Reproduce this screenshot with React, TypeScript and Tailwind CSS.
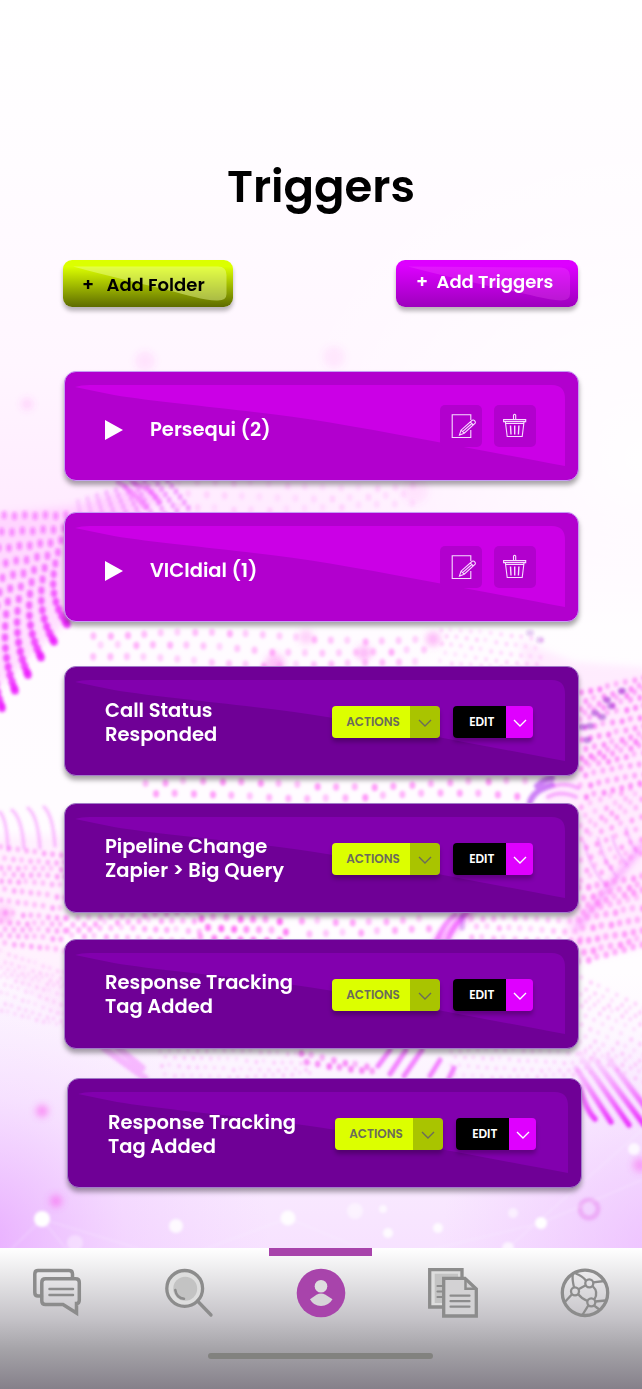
import React from "react";

type Dot = { x: number; y: number; rx: number; ry: number; o: number; c: string };

const noise = (n: number) => {
  const v = Math.sin(n * 127.1 + 11.7) * 43758.5453;
  return v - Math.floor(v);
};

function leftWave(): Dot[] {
  const dots: Dot[] = [];
  for (let i = 0; i < 11; i++) {
    const endX = 66 - i * 13;
    const endY = 624 + i * 16.6;
    const topX = 66 - i * 10.3;
    const count = 12 + i;
    for (let j = 0; j <= count; j++) {
      const t = j / count;
      const e = 1 - Math.pow(1 - t, 1.45);
      const y = 515 + (i % 2) + (endY - 515) * e;
      const x = topX + (endX - topX) * e - Math.sin(Math.pow(e, 1.4) * Math.PI) * 11 - e * 3 + Math.pow(e, 8) * 4;
      dots.push({ x, y, rx: 2.7 + t * 1.2, ry: 4.2, o: 0.36 + t * 0.5, c: "#ee1eff" });
    }
  }
  for (let i = 0; i < 10; i++) {
    for (let j = 0; j < 7; j++) {
      dots.push({
        x: 78 + i * 9.5 + j * (1 + i * 0.35),
        y: 510 - i * 3 + j * 5.5 - 8,
        rx: 2.5,
        ry: 3.2,
        o: 0.16 + i * 0.035,
        c: "#e94cff",
      });
    }
  }
  return dots;
}

function grid(
  x0: number, y0: number, x1: number, y1: number, sx: number, sy: number,
  r: number, o: number, c: string, slope = 0, seed = 1,
): Dot[] {
  const dots: Dot[] = [];
  let row = 0;
  for (let y = y0; y <= y1; y += sy) {
    for (let x = x0 + (row % 2) * (sx / 2); x <= x1; x += sx) {
      const k = noise(x * 3 + y * 7 + seed);
      dots.push({
        x: x + k * 2,
        y: y + slope * (x - x0) + Math.sin(x / 45 + row) * 3 + k * 2,
        rx: r,
        ry: r * 1.25,
        o: o * (0.55 + k * 0.6),
        c,
      });
    }
    row++;
  }
  return dots;
}

const softDots: Dot[] = [
  ...leftWave(),
  ...grid(178, 484, 420, 506, 18, 11, 3, 0.18, "#ff70f5", 0, 2),
  ...grid(92, 632, 430, 668, 17, 13, 3, 0.52, "#ff7af7", 0.02, 3),
  ...grid(440, 630, 540, 672, 10, 7, 2, 0.3, "#ff7af7", 0.1, 4),
  ...grid(145, 783, 530, 796, 19, 12, 3, 0.6, "#ff64f6", 0, 5),
  ...grid(0, 846, 66, 948, 8.5, 9, 2.4, 0.5, "#fb62f5", 0.08, 6),
  ...grid(0, 950, 66, 1010, 7, 7, 1.8, 0.26, "#fb72f5", 0.3, 7),
  ...grid(66, 914, 200, 938, 11, 8, 2.6, 0.45, "#ff5cf6", 0, 8),
  ...grid(200, 920, 290, 938, 13, 8, 3, 0.7, "#ff45f3", 0, 18),
  ...grid(300, 918, 430, 938, 17, 12, 3, 0.5, "#ff5cf6", 0, 28),
  ...grid(580, 690, 648, 800, 9, 8, 2.5, 0.65, "#fb5cf6", -0.25, 9),
  ...grid(580, 805, 648, 880, 10, 9, 2.4, 0.48, "#ff64f6", -0.4, 10),
  ...grid(578, 886, 648, 960, 9, 9, 2.8, 0.55, "#ff64f6", -0.22, 11),
  ...grid(470, 920, 580, 938, 11, 8, 2.6, 0.42, "#ff64f6", 0, 12),
  ...grid(580, 975, 648, 1060, 9, 8, 2, 0.3, "#ff74f6", 0.45, 13),
  ...grid(160, 1052, 310, 1076, 9, 7, 1.8, 0.28, "#ff64f6", 0, 14),
  ...grid(450, 1052, 590, 1076, 9, 7, 1.8, 0.26, "#ff64f6", 0, 24),
  ...grid(300, 1051, 375, 1062, 11, 6, 2.8, 0.6, "#f63bf2", 0.18, 15),
];

const violetDots = [
  [582, 727], [587, 740], [595, 713], [602, 717], [607, 700], [611, 706], [622, 691], [590, 726], [530, 633], [540, 640],
];

const hazeSpots = [
  [145, 361, 10, 0.11], [334, 357, 11, 0.1], [27, 404, 6, 0.18], [306, 637, 7, 0.28], [364, 653, 7, 0.42],
  [433, 639, 7, 0.42], [275, 664, 10, 0.35], [42, 1111, 6, 0.6], [56, 1201, 6, 0.55], [4, 915, 9, 0.3], [640, 1165, 7, 0.45], [415, 490, 13, 0.1],
];

const sparkles = [
  [42, 1219, 8, 1], [176, 1226, 7, 0.85], [288, 1218, 7.5, 0.9], [355, 1211, 8, 0.5], [383, 1209, 4, 0.7],
  [388, 1233, 5, 0.85], [438, 1228, 5, 0.85], [541, 1223, 6, 1], [513, 1213, 5, 0.55], [634, 1149, 6, 0.8], [75, 1243, 8, 0.35], [508, 1248, 6, 0.7],
];

function Backdrop() {
  return (
    <svg className="absolute inset-0 h-full w-full" viewBox="0 0 642 1389" aria-hidden="true">
      <defs>
        <linearGradient id="base" x1="0" y1="0" x2="0" y2="1">
          <stop offset="0" stopColor="#ffffff" />
          <stop offset="0.12" stopColor="#fffcff" />
          <stop offset="0.26" stopColor="#fff6ff" />
          <stop offset="0.37" stopColor="#ffebff" />
          <stop offset="0.45" stopColor="#fffbff" />
          <stop offset="0.7" stopColor="#fffdff" />
          <stop offset="0.8" stopColor="#fbf1ff" />
          <stop offset="0.9" stopColor="#f7e2ff" />
        </linearGradient>
        <radialGradient id="cornerLeft" gradientUnits="userSpaceOnUse" cx="-20" cy="1240" r="290">
          <stop offset="0" stopColor="#e296ff" stopOpacity="0.7" />
          <stop offset="0.5" stopColor="#e7abff" stopOpacity="0.24" />
          <stop offset="1" stopColor="#e9b5ff" stopOpacity="0" />
        </radialGradient>
        <radialGradient id="cornerRight" gradientUnits="userSpaceOnUse" cx="660" cy="1250" r="220">
          <stop offset="0" stopColor="#e6a8ff" stopOpacity="0.55" />
          <stop offset="1" stopColor="#e9b5ff" stopOpacity="0" />
        </radialGradient>
        <radialGradient id="light" gradientUnits="userSpaceOnUse" cx="642" cy="460" r="360">
          <stop offset="0" stopColor="#ffffff" stopOpacity="0.95" />
          <stop offset="1" stopColor="#ffffff" stopOpacity="0" />
        </radialGradient>
        <linearGradient id="fade" gradientUnits="userSpaceOnUse" x1="0" y1="1055" x2="0" y2="1122">
          <stop offset="0" stopColor="#f64dff" stopOpacity="0.1" />
          <stop offset="1" stopColor="#ea22ff" stopOpacity="0.9" />
        </linearGradient>
        <filter id="soft" x="-10%" y="-10%" width="120%" height="120%"><feGaussianBlur stdDeviation="1.500" /></filter>
        <filter id="hazy" x="-10%" y="-10%" width="120%" height="120%"><feGaussianBlur stdDeviation="3.500" /></filter>
      </defs>
      <rect width="642" height="1389" fill="url(#base)" />
      <rect width="642" height="1389" fill="url(#light)" />
      <rect width="642" height="1389" fill="url(#cornerLeft)" />
      <rect width="642" height="1389" fill="url(#cornerRight)" />
      <g filter="url(#hazy)">
        <path d="M-10 515L80 505L150 480L165 495L68 560V620L-10 695Z" fill="#ff9cff" opacity="0.28" />
        <path d="M520 640L575 662L655 668V945L570 963Z" fill="#ffb0fb" opacity="0.2" />
        <path d="M-10 835H64V1020L-10 960Z" fill="#ffb8fb" opacity="0.15" />
        <path d="M436 944L472 908" stroke="#f52fff" strokeWidth="9" opacity="0.42" />
        <path d="M575 930L645 842" stroke="#f52fff" strokeWidth="6" opacity="0.42" />
        {hazeSpots.map(([x, y, r, o], i) => <circle key={i} cx={x} cy={y} r={r} fill="#fb55ee" opacity={o} />)}
      </g>
      <g filter="url(#soft)">
        {softDots.map((d, i) => <ellipse key={i} cx={d.x} cy={d.y} rx={d.rx} ry={d.ry} fill={d.c} opacity={d.o} />)}
        {violetDots.map(([x, y], i) => <ellipse key={i} cx={x} cy={y} rx="4" ry="3.300" fill="#8c20c9" opacity={y < 650 ? 0.22 : 0.5} />)}
        <g fill="none" stroke="#ed35ff" strokeLinecap="round">
          <path d="M118 482Q132 490 146 508M132 482Q150 488 160 502" strokeWidth="5" opacity="0.4" />
          <path d="M12 810Q22 818 24 848M28 808Q38 816 40 848M44 807Q53 815 55 846M0 812Q7 820 8 850" strokeWidth="3.500" opacity="0.3" />
          <path d="M530 802Q534 790 552 785M537 786Q544 779 552 778" stroke="#a51cf0" strokeWidth="6" opacity="0.55" />
          <path d="M548 797Q560 790 576 797M554 786Q566 782 578 788" stroke="#f05cff" strokeWidth="4" opacity="0.45" />
          <path d="M455 915Q444 922 436 942M466 914Q455 922 447 942" strokeWidth="5" opacity="0.5" />
          <path d="M462 916V928" stroke="#9b1cea" strokeWidth="5" opacity="0.3" />
          <path d="M104 1048L145 1078M118 1048L142 1068" strokeWidth="7" opacity="0.3" />
          <path d="M390 1050L378 1066M406 1050L390 1074M422 1050L404 1076M440 1060L430 1076M454 1068L449 1078" strokeWidth="5" opacity="0.6" />
          <path d="M580 1087Q586 1110 595 1119M576 1068L611 1122M582 1058L629 1125M594 1058L645 1126M608 1058L658 1124" stroke="url(#fade)" strokeWidth="5.500" />
          <path d="M584 842Q589 866 606 886M598 838Q603 861 617 877M612 836Q616 852 627 865M626 828Q629 842 637 852" strokeWidth="3" opacity="0.25" />
        </g>
        <circle cx="589" cy="1209" r="9" fill="none" stroke="#e670eb" strokeWidth="5" opacity="0.38" />
        <path d="M42 1219L176 1260L288 1218L388 1260L541 1223L642 1180M42 1219L0 1260M42 1219L75 1260M508 1248L642 1130" fill="none" stroke="#ffffff" strokeWidth="2" opacity="0.18" />
        {sparkles.map(([x, y, r, o], i) => <circle key={i} cx={x} cy={y} r={r} fill="#fff" opacity={o} />)}
      </g>
    </svg>
  );
}

function CardGloss({ tone }: { tone: string }) {
  return (
    <svg className="absolute -left-px -top-px h-[109px] w-[514px]" viewBox="0 0 514 109" aria-hidden="true">
      <path d="M11 16Q17 14 26 14H488Q501 14 501 28V95C430 82 340 64 266 51.500C190 39 105 33 50 24Q30 20 11 16Z" fill={tone} />
    </svg>
  );
}

function EditIcon() {
  return (
    <svg viewBox="0 0 42 42" className="h-[42px] w-[42px]" fill="none" stroke="#f7dcff" strokeWidth="1.100">
      <path d="M30.800 15V9.700H12.200V32.500H30.800V25" />
      <path d="M19.500 30L21 25.200L32.200 15.300Q33.500 14.500 34.700 15.800T35.200 18.200L24.200 28.200L19.500 30ZM21 25.200L24.200 28.200M30.200 17L33.300 20M22.600 26.700L31.800 18.500" />
    </svg>
  );
}

function TrashIcon() {
  return (
    <svg viewBox="0 0 42 42" className="h-[42px] w-[42px]" fill="none" stroke="#f7dcff" strokeWidth="1.100">
      <path d="M19.500 14.500V10Q20.600 8.800 21.700 10V14.500M9.600 14.600H31.700V16.600H9.600ZM11.400 17L13.200 31.500H28.200L30 17M11.500 18.500H29.900" />
      <path d="M16.500 20.500L17 29.500M20.700 20.500V29.500M24.900 20.500L24.400 29.500" strokeWidth="1.400" />
    </svg>
  );
}

function FolderCard({ name }: { name: string }) {
  return (
    <section className="relative h-[110px] w-[515px] rounded-[12px] border border-[#c79df5] bg-[#b200ce] shadow-[0_4px_5px_rgba(0,0,0,0.35)]">
      <CardGloss tone="#cb00e6" />
      <div className="relative flex h-full items-center pl-10 pr-[42px]">
        <svg className="mt-2 h-5 w-[18px]" viewBox="0 0 18 20"><path d="M0 0L18 10L0 20Z" fill="#fff" /></svg>
        <h2 className="ml-[27px] mt-2 whitespace-nowrap text-[19.5px] font-semibold leading-6 text-white">{name}</h2>
        <div className="ml-auto flex gap-3">
          <button className="rounded-[5px] bg-[#b200ce]" aria-label="Edit"><EditIcon /></button>
          <button className="rounded-[5px] bg-[#b200ce]" aria-label="Delete"><TrashIcon /></button>
        </div>
      </div>
    </section>
  );
}

function Chevron({ color }: { color: string }) {
  return <svg className="mt-0.5 h-2 w-[14px]" viewBox="0 0 14 8" fill="none" stroke={color} strokeWidth="1.400"><path d="M1 1L7 7L13 1" /></svg>;
}

function TriggerCard({ name, lowered }: { name: string; lowered?: boolean }) {
  return (
    <section className="relative h-[110px] w-[515px] rounded-[12px] border border-[#a27bc8] bg-[#6f0096] shadow-[0_4px_5px_rgba(0,0,0,0.35)]">
      <CardGloss tone="#8200ae" />
      <div className="relative flex h-full items-center pl-10 pr-[45.5px]">
        <h2 className={`whitespace-pre-line text-[19.5px] font-semibold leading-6 text-white ${lowered ? "mt-[3px]" : "mt-px"}`}>{name}</h2>
        <div className="ml-auto mt-[2px] flex gap-[13.5px] text-[12px] font-semibold">
          <button className="flex h-[31.5px] w-[108px] overflow-hidden rounded-[4px] text-[#6b6b5b] shadow-[0_4px_4px_rgba(0,0,0,0.25)]">
            <span className="flex h-full w-[78px] items-center justify-center bg-[#dcff00] pl-[5px]">ACTIONS</span>
            <span className="flex h-full flex-1 items-center justify-center bg-[#a9c400]"><Chevron color="#6b6b5b" /></span>
          </button>
          <button className="flex h-[31.5px] w-[79.5px] overflow-hidden rounded-[4px] text-white shadow-[0_4px_4px_rgba(0,0,0,0.25)]">
            <span className="flex h-full w-[52.5px] items-center justify-center bg-black pl-[5px]">EDIT</span>
            <span className="flex h-full flex-1 items-center justify-center bg-[#df00ff] pl-px"><Chevron color="#fff" /></span>
          </button>
        </div>
      </div>
    </section>
  );
}

function BottomNav() {
  const icon = "h-[50px] w-[50px]";
  return (
    <nav className="relative flex h-[141px] flex-col items-center bg-[linear-gradient(180deg,#ffffff_0%,#c5c3c8_50%,#a5a3a8_72%,#85808a_100%)]">
      <div className="mr-[1.5px] h-[7.5px] w-[103.5px] bg-[#a844ab]" />
      <div className="mt-[12.5px] flex w-full justify-between px-8">
        <svg className={icon} viewBox="0 0 50 50" fill="none" stroke="#8c8c8c" strokeWidth="3.500" strokeLinecap="round">
          <path d="M9.500 28H6Q2.800 28 2.800 24.500V6Q2.800 2.500 6 2.500H37Q40.500 2.500 40.500 6V10" />
          <path d="M13.500 10.800H43.500Q47.300 10.800 47.300 14.500V32Q47.300 35.500 44.500 35.500V45L31 36.500H13.500Q9.800 36.500 9.800 33V14.500Q9.800 10.800 13.500 10.800Z" />
          <path d="M17.500 21H41M17.500 27H41" strokeWidth="2.500" />
        </svg>
        <svg className={icon} viewBox="0 0 50 50" fill="none" stroke="#8c8c8c" strokeWidth="3.300" strokeLinecap="round">
          <circle cx="20.700" cy="20.400" r="17.900" fill="#dedede" />
          <circle cx="21.200" cy="20.700" r="12" fill="#c3c3c3" stroke="none" />
          <path d="M11.300 22Q12.500 30 20 30.800" strokeWidth="2.500" />
          <path d="M33.500 33L47 47" />
        </svg>
        <svg className={icon} viewBox="0 0 50 50">
          <circle cx="25" cy="25" r="24.300" fill="#a844ab" />
          <circle cx="25" cy="18.300" r="6.300" fill="#dedddf" />
          <path d="M14 31.300L20.500 26.700Q25 24.500 29.500 26.700L36.500 31.300Q32.500 38 25 38T14 31.300Z" fill="#d6d5d8" />
        </svg>
        <svg className={icon} viewBox="0 0 50 50" fill="none" stroke="#8c8c8c" strokeWidth="3.300">
          <path d="M15 39H1.700V1.700H34V10" fill="#dedede" />
          <path d="M6.700 5.700H30V11H15V35H6.700Z" fill="#c3c3c3" stroke="none" />
          <path d="M15.700 10.300H37L48.300 21V48H15.700Z" fill="#d3d2d4" />
          <path d="M37.500 10.300V20.800H48" strokeWidth="2.500" />
          <path d="M9.500 18H14M9.500 23.500H14M9.500 29H14M22.500 27.700H41.500M22.500 33.200H41.500M22.500 38.700H41.500" strokeWidth="2.200" strokeLinecap="round" />
        </svg>
        <svg className={icon} viewBox="0 0 50 50" fill="none" stroke="#8c8c8c" strokeWidth="2.300">
          <circle cx="25" cy="24.800" r="22.700" strokeWidth="3.300" />
          <circle cx="15" cy="23.300" r="4" />
          <circle cx="29.300" cy="15.300" r="4" />
          <circle cx="31.300" cy="34.300" r="4" />
          <path d="M14 19.300Q12 11 12.800 6.500M18.500 21.300L25.800 17.300M26 12.700Q22 7.500 15.500 5.500M33.200 14.300L44.500 13M32.500 18Q39 24 34.300 31.500M18 26Q22 31 27.500 33M12 26.200L4 35M35.200 33.500L45.500 32.500M28.500 37.200L22.700 46.500M34 37.500L40 42" />
        </svg>
      </div>
      <div className="mr-px mt-[35px] h-[6px] w-[225px] rounded-full bg-[#82827f]" />
    </nav>
  );
}

export default function App() {
  return (
    <div className="relative flex h-[1389px] w-[642px] flex-col overflow-hidden bg-white font-['Poppins','Inter',sans-serif]">
      <Backdrop />
      <main className="relative h-[1248px] shrink-0 pt-[157px]">
        <h1 className="text-center text-[45px] font-semibold leading-[60px] text-black">Triggers</h1>
        <div className="mt-[42.5px] flex justify-between pl-[63px] pr-[64.5px]">
          <button className="relative h-[47.5px] w-[169.5px] rounded-[9px] bg-[linear-gradient(180deg,#dcff00_0%,#dcff00_14%,#5d6b00_100%)] shadow-[0_4px_4px_rgba(0,0,0,0.28)]">
            <svg className="absolute left-0 top-0 h-full w-full" viewBox="0 0 169.500 47.500"><path d="M10 6.500H155Q163.500 6.500 163.500 15V34Q163.500 40.500 155 40.500C142 41 125 35 104 30C76 23 45 16 10 6.500Z" fill="#efff98" fillOpacity="0.450" /></svg>
            <span className="relative flex items-center whitespace-nowrap pl-[19px] pt-[3px] text-[18px] font-semibold leading-6 text-black"><span className="w-[24.5px] text-left">+</span>Add Folder</span>
          </button>
          <button className="relative h-[47.5px] w-[181.5px] rounded-[9px] bg-[linear-gradient(180deg,#dd00ff_0%,#dd00ff_12%,#9d00bd_100%)] shadow-[0_4px_4px_rgba(0,0,0,0.28)]">
            <svg className="absolute left-0 top-0 h-full w-full" viewBox="0 0 181.500 47.500"><path d="M12 6.500L165 7.500Q174 8 174 16V34Q174 40.500 165 40.500C150 40 132 34 110 30C80 23 48 16 12 6.500Z" fill="#ff68ff" fillOpacity="0.220" /></svg>
            <span className="relative flex items-center whitespace-nowrap pb-[2px] pl-5 text-[18px] font-semibold leading-6 text-white"><span className="w-[20.5px] text-left">+</span>Add Triggers</span>
          </button>
        </div>
        <div className="mt-[64px] flex flex-col gap-[31px] pl-16">
          <FolderCard name="Persequi (2)" />
          <FolderCard name="VICIdial (1)" />
        </div>
        <div className="mt-11 flex flex-col pl-16">
          <TriggerCard name={"Call Status\nResponded"} lowered />
          <div className="mt-[27px]"><TriggerCard name={"Pipeline Change\nZapier > Big Query"} /></div>
          <div className="mt-[26px]"><TriggerCard name={"Response Tracking\nTag Added"} /></div>
          <div className="ml-[3px] mt-[29px]"><TriggerCard name={"Response Tracking\nTag Added"} lowered /></div>
        </div>
      </main>
      <BottomNav />
    </div>
  );
}
